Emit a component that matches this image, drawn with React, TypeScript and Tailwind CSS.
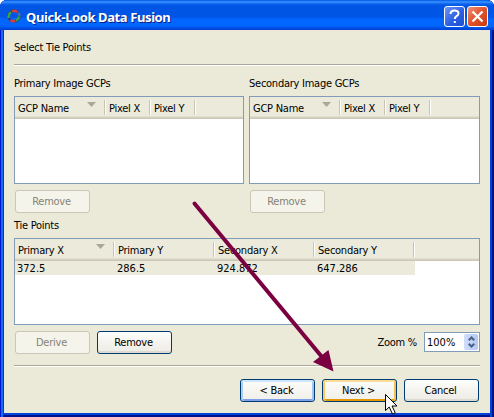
import type { ReactNode } from "react";

function Rule() {
  return <div className="h-[2px] shrink-0 border-t border-[#aca899] bg-white" />;
}

type Column = { label: string; width: string; sorted?: boolean };

function Table({ columns, height, row }: { columns: Column[]; height: string; row?: string[] }) {
  return (
    <div className={`flex flex-col border border-[#7f9db9] bg-white ${height}`}>
      <div className="flex h-[22px] shrink-0 border-b border-[#cbc7b8] bg-[#ebeadb] shadow-[inset_0_-1px_#d6d2c2,inset_0_-2px_#e2dece]">
        {columns.map((c) => (
          <div key={c.label} className={`flex h-[21px] shrink-0 pt-[3px] ${c.width}`}>
            <span className="flex-1 pt-[1px] pl-[3px] leading-4">{c.label}</span>
            {c.sorted && (
              <svg className="mt-[2px] mr-[8px] h-[5px] w-[9px]" viewBox="0 0 9 5">
                <path d="M0 0h9L4.5 5z" fill="#aca899" />
              </svg>
            )}
            <span className="h-[15px] w-[2px] border-r border-l border-r-white border-l-[#c7c5b2]" />
          </div>
        ))}
      </div>
      {row && (
        <div className="flex h-[14px] w-[400px] bg-[#ebeadb]">
          {row.map((v) => (
            <span key={v} className="w-[100px] pl-[2px] leading-4 tracking-[0px]">{v}</span>
          ))}
        </div>
      )}
    </div>
  );
}

function Button({ children, kind = "normal" }: { children: ReactNode; kind?: "normal" | "disabled" | "focus" | "hot" }) {
  const look = {
    normal: "border-[#003c74] bg-linear-to-b from-white via-[#f4f3ee] to-[#ecebe5] shadow-[inset_0_-2px_#dedad0]",
    disabled: "border-[#c9c7ba] bg-[#f5f4ea] text-[#858378]",
    focus: "border-[#003c74] bg-linear-to-b from-[#fcfcfa] to-[#f0efe9] shadow-[inset_0_2px_#cee7ff,inset_2px_0_#b0cbf5,inset_-2px_0_#a5c1ef,inset_0_-2px_#7f9fe8]",
    hot: "border-[#003c74] bg-linear-to-b from-[#fcfcfa] to-[#f0efe9] shadow-[inset_0_2px_#fddc98,inset_2px_0_#fbc761,inset_-2px_0_#f9bd50,inset_0_-2px_#e59700]",
  }[kind];
  return (
    <button className={`h-[23px] w-[75px] shrink-0 rounded-[3px] border pr-[2px] text-center leading-[21px] ${look}`}>
      {children}
    </button>
  );
}

const gcpColumns: Column[] = [
  { label: "GCP Name", width: "w-[91px]", sorted: true },
  { label: "Pixel X", width: "w-[45px]" },
  { label: "Pixel Y", width: "w-[45px]" },
];

const tieColumns: Column[] = [
  { label: "Primary X", width: "w-[100px]", sorted: true },
  { label: "Primary Y", width: "w-[100px]" },
  { label: "Secondary X", width: "w-[100px]" },
  { label: "Secondary Y", width: "w-[100px]" },
];

export default function App() {
  return (
    <div className="relative h-[417px] w-[494px] overflow-hidden bg-white font-['DejaVu_Sans_Condensed','DejaVu_Sans',sans-serif] text-[11px] tracking-[-0.25px] text-black">
      <div className="flex h-full flex-col rounded-t-[7px] bg-[#0831d9] px-1 pb-1 shadow-[inset_1px_0_#0019cf,inset_3px_0_#166aee,inset_-2px_0_#00138c,inset_-4px_0_#0441d8,inset_0_-2px_#00138c,inset_0_-4px_#0441d8]">
        <header className="-mx-1 flex h-[30px] shrink-0 items-start rounded-t-[7px] bg-[linear-gradient(#0058e6_0px,#3a93ff_2px,#0b61eb_4px,#0055e5_6px,#0055e5_17px,#0066ff_19px,#0066ff_26px,#0050df_28px,#003dd7_30px)] pl-[7px]">
          <svg className="mt-[9px] h-[14px] w-[14px] shrink-0" viewBox="0 0 14 14" fill="none" strokeWidth="2.6">
            <circle cx="7" cy="7" r="5.5" stroke="#1d3f86" strokeWidth="2.6" />
            <path d="M1.8 9Q1 5 4 3" stroke="#3fa343" />
            <path d="M5 2.2Q8 1 10.500 3" stroke="#d2413c" />
            <path d="M11 3.500Q12.500 5 12.300 7" stroke="#3a6fc4" />
            <path d="M12.300 7.500Q11.500 10.500 9 11.500" stroke="#3fa343" />
            <path d="M8.500 12Q5.500 12.800 3.500 11" stroke="#d2413c" />
          </svg>
          <h1 className="mt-[7px] ml-[5px] flex-1 font-['Noto_Sans',sans-serif] text-[13px] leading-5 font-bold tracking-[-0.4px] text-white [text-shadow:1px_1px_#0a1e83]">
            Quick-Look Data Fusion
          </h1>
          <button className="mt-[6px] flex h-[21px] w-[21px] items-center justify-center rounded-[3px] border border-white bg-[linear-gradient(135deg,#7095f4,#2c60e4_55%,#1c4fd0)]">
            <svg className="h-[15px] w-[13px]" viewBox="0 0 13 15" fill="none" stroke="white" strokeWidth="2">
              <path d="M2.5 5Q2.5 1.5 6.5 1.5T10.5 4.5Q10.5 6 8.3 7.3Q6.8 8.3 6.8 10M6.8 12v2" />
            </svg>
          </button>
          <button className="mt-[6px] mr-[6px] ml-[2px] flex h-[21px] w-[21px] items-center justify-center rounded-[3px] border border-white bg-[linear-gradient(135deg,#ee9275,#e2502a_50%,#c63b10)]">
            <svg className="h-[13px] w-[13px]" viewBox="0 0 13 13" stroke="white" strokeWidth="2.3">
              <path d="M1.5 1.5l10 10M11.5 1.5l-10 10" />
            </svg>
          </button>
        </header>
        <main className="flex flex-1 flex-col bg-[#ebe9d8] pr-[10px] pl-[10px]">
          <p className="h-[34px] pt-[10px] leading-4">Select Tie Points</p>
          <Rule />
          <div className="flex gap-[5px] pt-[10px]">
            <section className="w-[230px]">
              <h2 className="h-5 leading-4">Primary Image GCPs</h2>
              <Table columns={gcpColumns} height="h-[88px]" />
              <div className="flex pt-[6px] pl-[1px]"><Button kind="disabled">Remove</Button></div>
            </section>
            <section className="w-[231px]">
              <h2 className="h-5 leading-4">Secondary Image GCPs</h2>
              <Table columns={gcpColumns} height="h-[88px]" />
              <div className="flex pt-[6px] pl-[1px]"><Button kind="disabled">Remove</Button></div>
            </section>
          </div>
          <h2 className="h-[25px] pt-[5px] leading-4">Tie Points</h2>
          <Table columns={tieColumns} height="h-[87px]" row={["372.5", "286.5", "924.872", "647.286"]} />
          <div className="flex h-[40px] items-start gap-[7px] pt-[6px] pl-[1px]">
            <Button kind="disabled">Derive</Button>
            <Button>Remove</Button>
            <label className="ml-auto pt-[4px] leading-4">Zoom %</label>
            <div className="mt-[1px] flex h-5 w-[56px] border border-[#7f9db9] bg-white p-[1px]">
              <span className="flex-1 pl-[1px] leading-[18px] tracking-[0px]">100%</span>
              <span className="flex w-[14px] flex-col items-center justify-center gap-[3px] rounded-[2px] bg-linear-to-r from-[#d0defc] to-[#b4c8f6]">
                <svg className="h-[12px] w-[7px]" viewBox="0 0 7 12" fill="#4d6185">
                  <path d="M3.500 0L7 3.500L5.500 5L3.500 3L1.500 5L0 3.500zM3.500 12L7 8.500L5.500 7L3.500 9L1.500 7L0 8.500z" />
                </svg>
              </span>
            </div>
          </div>
          <Rule />
          <div className="flex justify-end gap-[7px] pt-[12px] pr-[1px]">
            <Button kind="focus">&lt; Back</Button>
            <Button kind="hot">Next &gt;</Button>
            <Button>Cancel</Button>
          </div>
        </main>
      </div>
      <svg className="pointer-events-none absolute inset-0 h-[417px] w-[494px]" viewBox="0 0 494 417">
        <path d="M194.500 203.500L322 357" stroke="#7b0041" strokeWidth="4" strokeLinecap="round" />
        <path d="M333.500 371.500L313 362L328.500 350Z" fill="#7b0041" />
        <path d="M385.500 394.500v16l3.700-3.500 3.300 7 2.700-1.300-3.200-6.700h5z" fill="white" stroke="black" />
      </svg>
    </div>
  );
}
